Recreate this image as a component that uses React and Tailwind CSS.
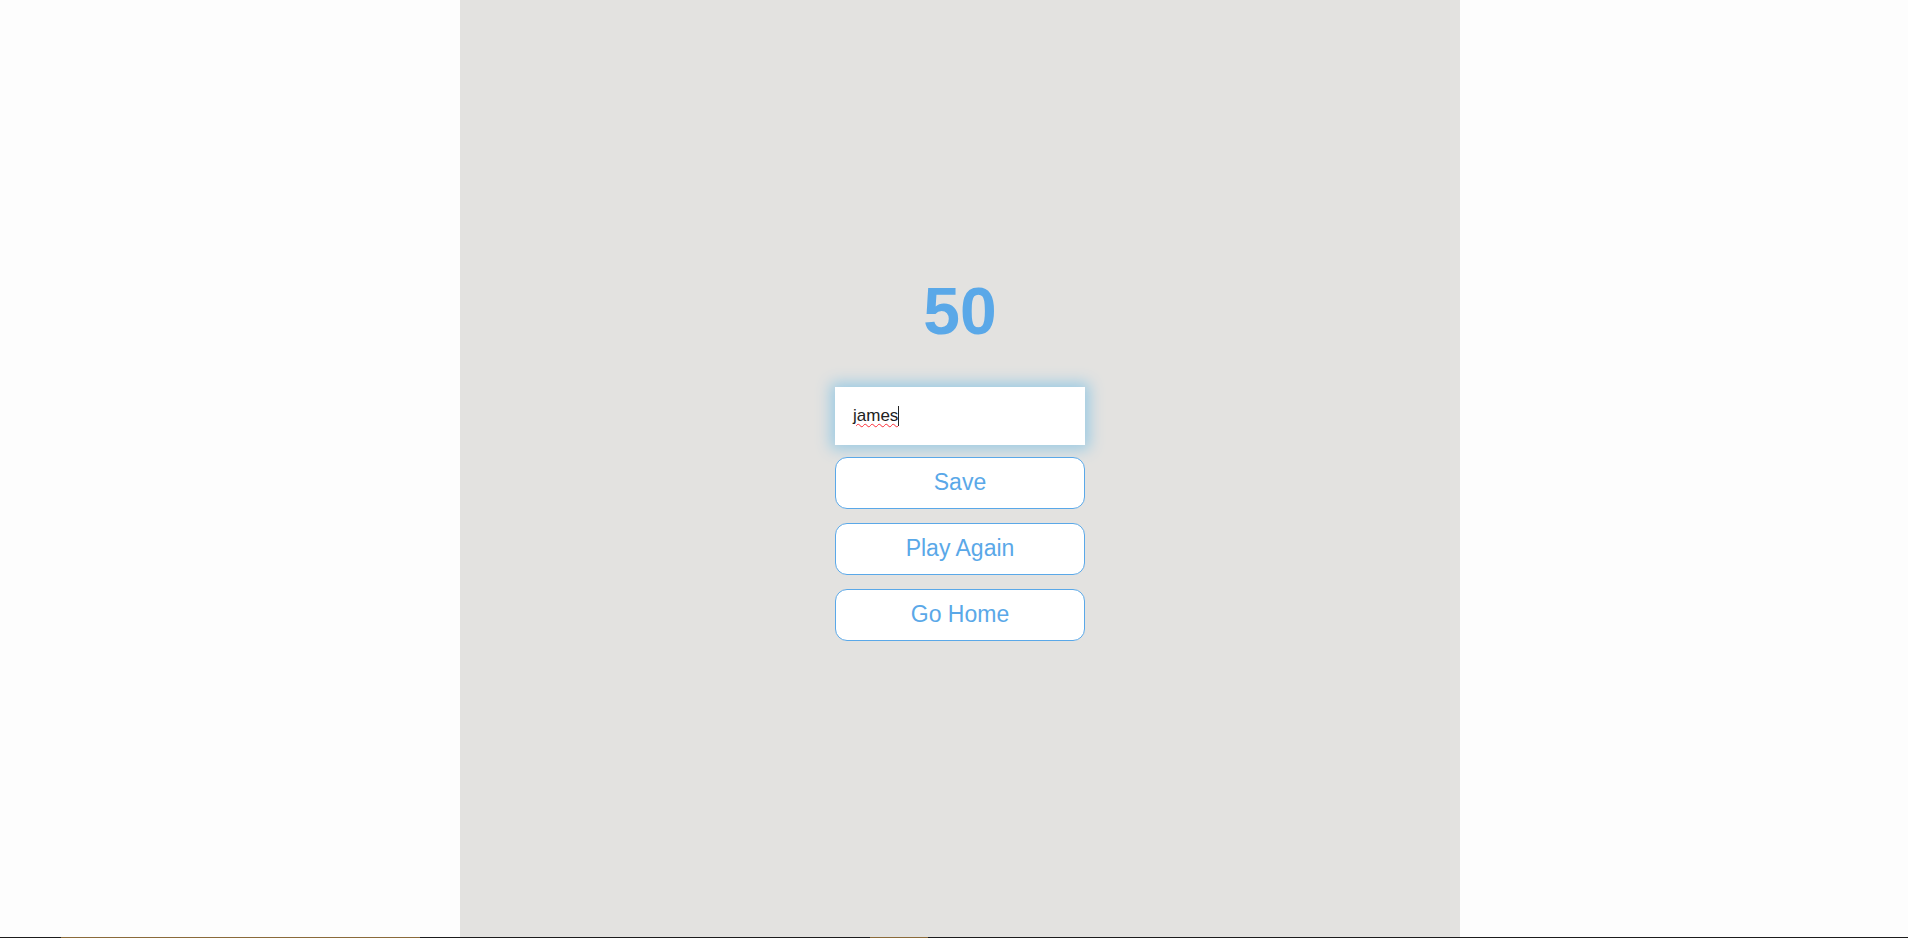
import React from "react";

export default function App() {
  const font = { fontFamily: '"Liberation Sans", Arial, sans-serif' };
  return (
    <div className="w-full h-[938px] flex flex-col bg-[#fdfdfd] overflow-hidden" style={font}>
      <div className="flex h-[937px] pl-[460px]">
        <div className="w-[1000px] h-full bg-[#e3e2e0] flex flex-col items-center pt-[278px]">
          <h1 className="text-[66px] leading-none h-[66px] font-bold text-[#5aa8e8]">50</h1>
          <div className="mt-[43px] w-[250px] h-[58px] bg-white flex items-center pl-[18px] text-[17px] text-[#222] shadow-[0_0_14px_4px_#98cae4]">
            <span className="underline decoration-wavy decoration-red-500 decoration-1 underline-offset-2">james</span>
            <span className="w-px h-[20px] bg-[#222]"></span>
          </div>
          <div className="mt-[12px] flex flex-col gap-[14px]">
            {["Save", "Play Again", "Go Home"].map((t) => (
              <button
                key={t}
                className="w-[250px] h-[52px] bg-white border border-[#5aa8e8] rounded-[12px] text-[23px] text-[#5aa8e8] flex items-center justify-center pb-px"
              >
                {t}
              </button>
            ))}
          </div>
        </div>
      </div>
      <div className="h-px w-full bg-[#1c1c1c] flex">
        <div className="ml-[61px] w-[359px] h-px bg-[#8a6a3a]"></div>
        <div className="ml-[450px] w-[58px] h-px bg-[#8a6a3a]"></div>
      </div>
    </div>
  );
}
